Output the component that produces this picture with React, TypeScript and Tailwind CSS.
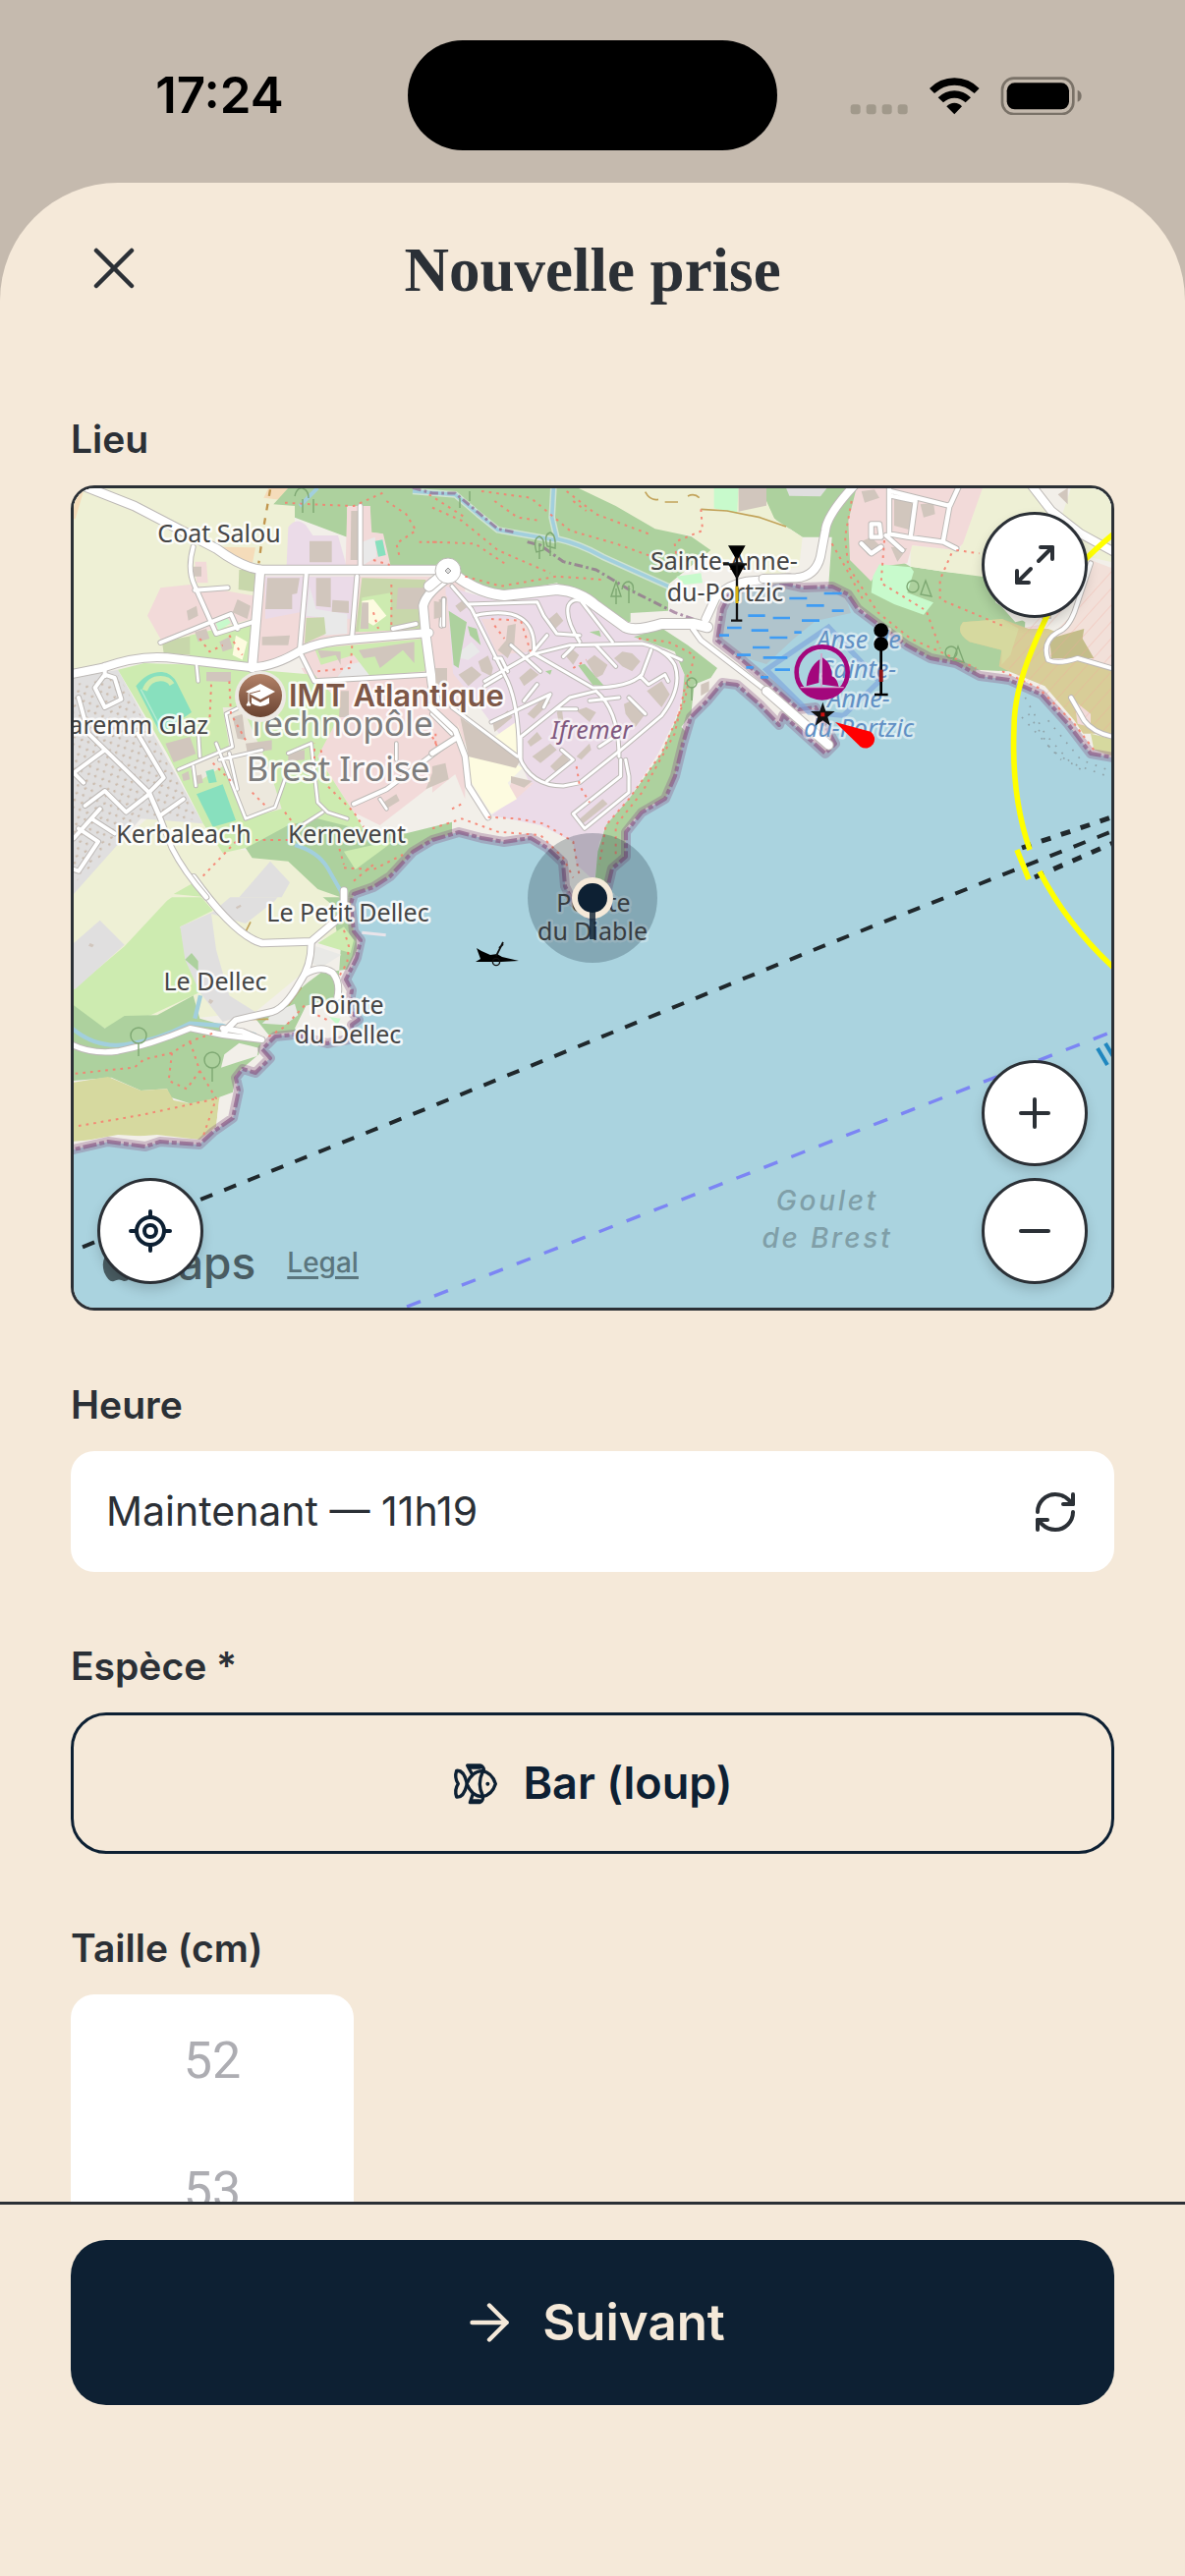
import { useState } from "react";
import { ArrowRight, LocateFixed, Maximize2, Minus, Plus, RefreshCw, X } from "lucide-react";

const FIELD = "#eef0d5";
const FOREST = "#add19e";
const GRASS = "#cdebb0";
const MEADOW = "#c8d7ab";
const HOMES = "#e0dfdf";
const SHOPS = "#f2dad9";
const CAMPUS = "#ebdbe8";
const BUILDING = "#d1c6bd";
const HEATH = "#d6d99f";
const PITCH = "#88e0be";
const PARK = "#c8facc";
const SAND = "#f2efe9";

const LAND =
  "M60 1172L75 1170L110 1162L148 1167L163 1162L203 1165L217 1152L237 1138L243 1110L240 1097L247 1088L260 1092L275 1077L267 1068L280 1055L300 1053L333 1062L360 1057L358 1043L365 1038L355 1027L358 1008L352 997L363 975L367 957L360 948L357 920L360 910L380 903L397 892L420 867L440 855L467 847L490 853L513 857L540 853L557 863L573 878L575 902L583 918L603 933L618 905L623 884L637 872L637 847L653 827L677 813L687 790L695 757L703 730L720 713L735 695L750 697L773 717L793 738L797 728L840 767L850 757L830 720L813 722L780 693L753 670L730 652L735 620L742 606L765 592L790 592L817 598L847 597L863 605L873 620L893 635L923 657L947 670L973 675L997 688L1027 692L1060 707L1087 737L1110 767L1150 774V480H60Z";

type Shape = { d: string; f: string };
type Line = { d: string; w: number };
type Tile = {
  at: string;
  fills: Shape[];
  buildings: string;
  roads: Line[];
  paths: string;
};

const tiles: Tile[] = [
  {
    at: "translate(60 900) scale(.33333)",
    fills: [
      { f: FIELD, d: "M0 -60H900V130L770 180V250L600 390L300 420L0 380Z" },
      { f: GRASS, d: "M45 320L200 190L330 50L400 0L470 80L370 130L400 220L430 330L280 400L140 440L45 380Z" },
      { f: HOMES, d: "M45 180L125 110L200 185L50 320H45ZM370 130L470 85L580 -10H700L660 50L570 120L465 90L480 200L520 340L600 390L500 420L430 330L385 230Z" },
      { f: FOREST, d: "M45 370L140 440L200 402L300 400L410 340L430 410L500 430L620 470L610 520L540 580L530 640L490 660L400 670L340 650L330 625L250 630L160 590L45 600ZM385 230L405 210L425 235V265Z" },
      { f: FOREST, d: "M640 460L600 410L700 350L760 300L800 270L880 260L910 200L900 0H760L830 60L860 200L850 350L760 370L720 450Z" },
      { f: HEATH, d: "M45 605L150 588L250 630L330 625L350 660L400 670L490 650L480 740L430 780L300 765L45 785Z" },
      { f: SAND, d: "M495 560L505 520L550 485L610 500L605 525L540 545ZM490 650L545 630L560 700L500 750L480 740ZM720 440L755 370L890 395V480H760ZM45 790L180 765L430 780V830H45Z" },
      { f: GRASS, d: "M790 180L870 130L900 170L890 210Z" },
      { f: "#e9e9e6", d: "M785 190L862 215L800 255L770 240ZM660 390L720 365L730 400L690 430L620 425Z" },
      { f: PARK, d: "M825 405L860 410L850 430Z" },
    ],
    buildings: "M95 180l12 5l-5 8l-12-5zM540 70l14-8l3 6l-14 8zM460 350l12 6l-8 10l-8-6zM500 375l14 8M785 400l15 15",
    roads: [
      { w: 20, d: "M410 -20Q540 160 620 180L770 175L870 90V20" },
      { w: 18, d: "M770 180Q770 250 735 300Q690 380 650 390L540 415L505 450" },
      { w: 18, d: "M750 275Q800 245 835 270Q860 300 850 345" },
      { w: 16, d: "M40 490Q100 520 180 510Q280 490 400 440L500 460L620 475M500 440L560 450L620 475" },
    ],
    paths:
      "M50 578L230 560L260 535L345 515L400 480L470 455M345 515L335 600L390 625L430 570L400 480M430 570L480 655L440 770M60 738L250 705L480 655M640 465L690 435L750 370M870 140L885 190L880 240L850 290M790 400L830 420",
  },
  {
    at: "translate(60 480) scale(.33333)",
    fills: [
      { f: FIELD, d: "M0 0H720V285L600 290V590L400 575L260 560L0 620Z" },
      { f: FIELD, d: "M0 1300L280 1050L440 1075L520 1150L900 1200V1300Z" },
      { f: "#f5dcba", d: "M45 50H78L50 145H45ZM640 50H700L690 88L625 80ZM500 230L600 232L590 285L530 268Z" },
      { f: FOREST, d: "M700 50H1240V310L1010 285L985 190L950 185V105H880V200L720 140V105L655 100Z" },
      { f: CAMPUS, d: "M700 170Q725 135 755 165L775 195H852L877 285H695Z" },
      { f: SHOPS, d: "M880 105H950L955 185L990 190L1012 285H875Z" },
      { f: SHOPS, d: "M740 600L1200 560V910L980 1080L900 1040L790 870L800 700Z" },
      { f: SHOPS, d: "M625 320H1240V1000L1200 900L1120 620L800 640L740 560L605 600Z" },
      { f: CAMPUS, d: "M630 320H905L890 450L755 445L735 430L630 450Z" },
      { f: "#e9e9e9", d: "M765 350L785 420L880 435V495L810 500L800 445L755 440ZM925 215L965 200L970 260L930 285ZM1150 460H1200V560H1150ZM880 590L950 575V635L840 640Z" },
      { f: MEADOW, d: "M925 325L1120 330L1110 480L905 490ZM755 447L810 445L815 495L750 525ZM550 300H600L595 367L548 360ZM315 520L410 500V560L320 555Z" },
      { f: GRASS, d: "M925 385L1015 370L1010 485L915 490ZM400 500L590 455L582 590L400 565ZM780 540L1115 510L1118 610L950 625L900 560L800 590Z" },
      { f: "#fdfbe0", d: "M925 395L960 390L1000 440L960 470L925 450ZM540 500L575 520L560 575L530 560Z" },
      { f: SHOPS, d: "M310 355L400 345L600 380L592 450L315 520L270 440ZM415 275H450L455 340H420Z" },
      { f: HOMES, d: "M45 630L180 605L440 1075L250 1060L45 1290Z" },
      { f: GRASS, d: "M180 605L260 585L420 590L780 620L870 720L790 870L900 1040L935 1100L700 1120L500 1165L440 1075L330 860L230 690Z" },
      { f: "#ece8dd", d: "M400 900L520 840L500 720L560 720L640 900L680 1030L570 1060L500 900L420 950Z" },
      { f: PITCH, d: "M235 655Q270 610 315 612Q345 615 360 645L405 735L310 800ZM420 985L500 955L540 1065L470 1085ZM448 915L472 908L482 948L458 952ZM965 212L988 208L998 255L975 260ZM585 1145L615 1142V1160H585Z" },
      { f: PARK, d: "M478 462L515 448L525 462L488 485Z" },
      { f: HOMES, d: "M550 1300L645 1190L705 1255L680 1300Z" },
      { f: FOREST, d: "M570 1150L700 1080L790 1060L930 1095L1060 1105L1200 1070V1300H860L790 1275L700 1190L590 1180Z" },
      { f: GRASS, d: "M870 1160L960 1140L1020 1130L905 1215ZM350 1290L420 1250L450 1300Z" },
    ],
    buildings:
      "M765 212H833V277H765ZM892 120H912V270H890ZM636 325H735L727 372L712 375V420H630ZM785 325H830V415L785 410ZM835 392L885 395V432L833 428ZM1035 355L1122 355V420H1030ZM325 830L400 810L418 862L350 888ZM450 612H525V642L450 640ZM620 505L705 500L700 530H620ZM915 545L1085 520V585L1050 545L980 600L965 565L930 570ZM790 545L860 550V590L845 560L800 570ZM545 390L585 410L575 450L530 430ZM390 425L420 410L425 440L395 455ZM410 290L435 290V320H410ZM925 400H945V480H920ZM1160 390V460H1180V390ZM1150 600H1185V650H1150ZM860 670H885V750H855ZM415 490L450 480L460 510L425 520ZM490 520L520 505L530 540L500 550ZM1140 920L1180 890L1190 940L1120 970ZM570 830L650 820V850L575 860ZM700 860L750 850V880L700 885ZM990 1010L1030 985L1040 1005L1000 1030ZM375 925L395 915L400 940L380 945ZM415 930L435 925L440 950L420 955ZM530 750L560 740L570 820L545 815Z",
    roads: [
      { w: 12, d: "M60 690L90 800L275 980M240 800L320 935L275 980M45 920L140 850M45 920L75 950M80 1020L140 975L205 1040L275 985M310 1050L380 1000M45 1120L125 1030M100 1060L170 1105M60 1090L120 1130L60 1220L45 1215M110 660L140 620L170 630L190 695L140 720ZM140 625V590" },
      { w: 8, d: "M365 910L530 840L510 740L560 715M410 900L418 960M430 870L425 790M480 830L570 1060L660 1025L690 940M520 860L545 970M490 880L620 850M770 830L790 1010L820 1040L880 1060M805 1040L750 1075M770 830L700 860M420 590L425 640M1030 830V880M980 1000L1000 1030" },
      { w: 12, d: "M410 230Q390 300 415 350L480 495L590 460M310 522L525 435L545 480M415 362L515 355M755 315L735 545M920 105V290M910 320L895 500M740 560L780 640L1120 620M1175 390L1168 470M1020 480L1090 465M900 1015L1000 970L1200 820M1140 740L1200 800" },
      { w: 14, d: "M275 980L310 1060L345 1150Q380 1220 450 1300" },
      { w: 26, d: "M40 30L230 105L480 235Q560 295 620 300H1160" },
      { w: 26, d: "M615 300L590 600" },
      { w: 24, d: "M40 618L130 600Q240 560 330 568L590 598Q660 595 740 545Q800 518 890 512L1130 492" },
      { w: 26, d: "M1200 315Q1120 370 1112 410L1120 500L1140 650L1150 700" },
    ],
    paths:
      "M690 95L770 100L900 105L1000 60M1000 90L1060 130L1090 180L1030 220L1040 260M1100 215H1160M960 270L1010 285M1130 70L1240 140M465 650L460 760M520 640L525 740L570 820M790 610L890 600L895 530M1015 345V480M960 430L975 480M430 510L460 550L500 530M520 500L560 560M470 890L530 950M590 980L630 1020M800 850L820 960L900 1040L930 1085M600 1125H700M440 1235L540 1130M690 1040L720 1080M870 1210L960 1215L1050 1170M900 1250L960 1200M780 900V830M1150 800V850M850 1130L870 1200",
  },
  {
    at: "translate(440 480) scale(.33333)",
    fills: [
      { f: FIELD, d: "M430 50H1080V330L850 260L790 195L700 185Z" },
      { f: FOREST, d: "M-20 50H445L560 105L680 175L790 198L850 240L720 345V430L600 460L480 390L380 340L220 370L100 330L-20 290Z" },
      { f: SAND, d: "M605 432L720 425L850 330L900 330L870 410V480L740 480L605 470Z" },
      { f: PARK, d: "M860 50H935L930 128L860 112ZM745 320L820 310L825 340L770 345Z" },
      { f: BUILDING, d: "M935 50H1070L1040 100L935 122Z" },
      { f: FOREST, d: "M1020 50H1090V180L1050 150Z" },
      { f: CAMPUS, d: "M40 350L200 395L430 370L600 495L650 500L740 560L780 640L740 760L690 860L600 1000L510 1130L495 1250L440 1200L430 1130L330 1080L180 1050L300 960L270 890L130 700L50 600Z" },
      { f: "#e9e9e9", d: "M85 550L120 520L145 550L110 575L85 570ZM0 560H45V590H0ZM120 900L160 890L195 950L150 970Z" },
      { f: SHOPS, d: "M150 450L270 450L310 500L300 550L200 560ZM0 360L45 380L65 640L0 640ZM0 760L60 820L100 900L0 980ZM240 950L310 950L250 1005L230 980Z" },
      { f: FOREST, d: "M50 425L105 460L80 600L65 590ZM108 472L135 480L148 530L115 500ZM445 592L465 587L525 655L490 652ZM480 490L510 485L515 505ZM345 610L365 605L360 620Z" },
      { f: FOREST, d: "M615 505L700 478L780 530L870 600L850 630L800 650L790 740L760 780L780 800L740 930L720 990L640 1035L590 1090L590 1180L540 1260L495 1270L505 1160L530 1080L600 1000L700 860L760 720L770 620L740 550Z" },
      { f: "#fdfbe0", d: "M75 765L110 870L250 890L275 905L230 950L258 1000L180 1045L120 950ZM190 810L255 765L262 870L225 840Z" },
    ],
    buildings:
      "M85 750L270 880L255 905L150 880L110 870ZM240 930L305 945L280 965L240 950ZM350 455L380 430L400 455L370 485ZM80 620L120 595L150 620L110 655ZM140 580L170 562L185 600L180 625L150 610ZM265 630L300 600L325 620L280 655ZM230 470L255 465L250 530L230 570L200 545L225 515ZM405 560L425 540L448 560L430 590ZM470 580L495 560L535 590L520 620L500 630ZM555 570L580 550L610 555L635 580L610 610L580 595ZM655 670L700 640L725 680L700 720ZM585 710L615 695L650 740L620 780L590 740ZM440 730L470 720L500 735L480 765ZM290 740L340 690L360 705L310 755ZM185 770L230 730L245 750L190 795ZM305 870L360 830L380 850L330 890ZM290 825L320 795L335 815L300 840ZM360 900L400 860L420 885L380 920ZM440 870L480 830L485 850L455 880ZM445 1065L520 1000L535 1015L460 1075ZM70 410L90 395L105 415L85 430ZM5 395L28 400V445L5 450ZM10 600H45V650H10ZM820 650L845 640V670L820 685ZM0 900L40 890L30 920L0 950ZM380 735L395 720L400 760L385 760Z",
    roads: [
      { w: 9, d: "M60 350L120 420L230 640Q265 720 265 870Q300 960 400 960L450 950L575 850L700 745Q765 660 740 590Q710 540 640 525L420 530L300 560L160 640" },
      { w: 9, d: "M110 405L320 398L340 440L380 495L450 500M130 440Q320 400 310 550M300 550L490 660Q600 660 640 620L668 545M450 390L550 520M450 520Q405 450 415 410Q430 380 470 400M270 880V810L420 690L500 670Q570 730 570 870M160 655L210 625M180 765L360 680L340 720M575 880V930L430 1045L465 1090L600 980V930L590 880M350 945L430 880L395 850M635 625L660 650L710 620L720 640M400 565L430 535M500 530L560 595M240 530L330 610M190 570H210L230 610M320 650L280 700M480 700L570 690M600 690L650 740M380 725H440M510 840L570 800M350 500L300 560" },
      { w: 16, d: "M-10 715L70 790L100 870L110 960L170 1055M0 860L70 815" },
      { w: 9, d: "M35 390V470M60 720L260 870M705 550L760 575" },
      { w: 30, d: "M-10 350L50 300Q130 370 220 378L380 360Q450 365 500 410L590 475Q620 490 700 465H800L840 475" },
      { w: 24, d: "M835 450L865 385Q900 345 960 335L1090 325" },
      { w: 14, d: "M795 480L820 515L1080 715" },
    ],
    paths:
      "M150 60L300 80L420 180L560 220L700 270M190 90L260 140L330 150M0 110L90 150L200 240L360 310M0 215L130 220L220 280M100 320L210 350L380 320L520 330M410 60L500 130L660 190M820 115L825 180L740 215M740 220L750 290M430 90L470 120M180 450L270 455L300 550M190 470L220 510M630 510L720 520L800 560L770 700L700 860L600 1000L530 1080L510 1200M780 620L740 800L640 980L560 1080L560 1180M170 1055L260 1060L340 1075L430 1130L450 1240M0 1090L90 1060L200 1100L330 1110L400 1180L430 1240M60 1030L100 1010M440 900L450 960L480 1010M430 600L470 575M0 810L20 850",
  },
  {
    at: "translate(780 480) scale(.33333)",
    fills: [
      { f: FOREST, d: "M0 50H280V200L440 290L540 305L690 320L700 400L790 460L780 640L650 640L430 540L250 385L190 345L200 200L110 200L20 140L0 90Z" },
      { f: FIELD, d: "M0 90L25 145L110 200L100 290L0 310Z" },
      { f: HOMES, d: "M60 50H185L165 76L70 74Z" },
      { f: FIELD, d: "M640 50H1070V280L980 260L690 325L540 305L440 290V225L590 240Z" },
      { f: SHOPS, d: "M275 50H660L600 220L580 240L445 225L430 280L345 290L320 335L255 270L250 150ZM770 480L850 465L830 530L770 510Z" },
      { f: PARK, d: "M345 283L440 292L450 305L430 370L510 400L480 437L390 405L320 370L325 320Z" },
      { f: SAND, d: "M800 50H930L900 140ZM680 370L760 460L1000 400L990 270Z" },
      { f: "#d8cd98", d: "M600 460L720 450L800 480L860 480L1070 560V800L960 800L850 660L740 610L710 595L718 545L620 520Q575 490 600 460Z" },
      { f: HEATH, d: "M600 460L720 450L770 480L745 560L718 590V545L620 520Q575 490 600 460ZM990 800L1070 820V890L1000 850Z" },
      { f: "#f2e0d9", d: "M990 270L1070 300V600L960 570L870 580L850 540L870 500L930 440L960 360Z" },
      { f: "#c4bd8a", d: "M865 510L970 480L965 510L1000 570L870 570Z" },
      { f: SAND, d: "M640 605L740 610L850 655L940 760L1000 850L1060 870V900H980L830 700L640 640Z" },
      { f: SHOPS, d: "M940 700L990 740L990 780L950 770Z" },
    ],
    buildings:
      "M390 85H445V180L390 165ZM470 100L510 95L515 130L480 140ZM290 60L330 55L345 80L300 95ZM285 215L320 200L345 225L310 255ZM380 230L430 235L400 275ZM890 70L920 50V100ZM840 420H870V450H840Z",
    roads: [
      { w: 13, d: "M375 40V190L430 200L540 215L580 235M380 60L560 105L590 40M560 100L540 210M385 75L455 90L440 200M320 160H345L350 200H320ZM290 220L320 250L350 230M365 195L415 240" },
      { w: 24, d: "M800 30L870 120L960 190L1070 250" },
      { w: 24, d: "M-10 327L90 325Q150 320 165 260L180 180Q185 130 275 35" },
      { w: 12, d: "M990 280L940 430Q920 480 890 490Q840 520 860 575Q890 590 950 570L1070 605M930 690L970 760Q1000 800 1070 812" },
      { w: 26, d: "M0 670L190 835" },
    ],
    paths:
      "M260 90L240 200L250 290L340 430L440 510L530 550L640 600M200 220L240 290L300 400M360 210L350 340L480 420M565 250L530 330L530 390L720 470M490 430L530 540M580 240L650 250M720 610L830 660L940 770L1000 850",
  },
];

const placeLabels = [
  { x: 223, y: 552, t: "Coat Salou" },
  { x: 187, y: 858, t: "Kerbaleac'h" },
  { x: 353, y: 858, t: "Kernevent" },
  { x: 354, y: 938, t: "Le Petit Dellec" },
  { x: 219, y: 1008, t: "Le Dellec" },
  { x: 353, y: 1032, t: "Pointe" },
  { x: 354, y: 1062, t: "du Dellec" },
  { x: 737, y: 580, t: "Sainte-Anne-" },
  { x: 738, y: 612, t: "du-Portzic" },
];

const bayLabels = [
  { y: 660, t: "Anse de" },
  { y: 690, t: "Sainte-" },
  { y: 720, t: "Anne-" },
  { y: 750, t: "du-Portzic" },
];

const marshDashes =
  "M70 387h54M176 372h54M122 409h54M200 425h36M20 447h52M108 455h54M-56 440h52M-120 477h44M-46 485h52M85 491h22M10 507h54M-144 500h30M-42 537h52M-10 568h74M-90 560h42M-62 598h22M26 605h46M-18 628h24";

function MapDrawing() {
  return (
    <svg
      className="absolute inset-0 size-full"
      viewBox="75 497 1056 834"
      preserveAspectRatio="xMidYMid slice"
      role="img"
      aria-label="Carte de la Pointe du Diable"
    >
      <defs>
        <clipPath id="land">
          <path d={LAND} />
        </clipPath>
        <pattern id="roofs" width="30" height="34" patternUnits="userSpaceOnUse" patternTransform="rotate(-28)">
          <path d="M3 5h8v6h-8zM18 20h7v7h-7z" fill="#cbbcae" />
        </pattern>
        <pattern id="hatch" width="34" height="34" patternUnits="userSpaceOnUse" patternTransform="rotate(42)">
          <path d="M0 0V34" stroke="#f3a79a" strokeWidth="3" opacity=".6" />
        </pattern>
        <linearGradient id="school" x1="0" y1="0" x2="0" y2="1">
          <stop offset="0" stopColor="#b38268" />
          <stop offset="1" stopColor="#6a4331" />
        </linearGradient>
      </defs>

      <rect x="60" y="480" width="1100" height="870" fill="#aad3df" />
      <path d="M733 622L742 606L765 594L790 594L817 600L847 599L860 606L866 624L830 632L808 650L780 676L754 668L730 652Z" fill="#b0c4cc" />
      <g clipPath="url(#land)">
        <path d={LAND} fill={SAND} />
        {tiles.map((tile) => (
          <g key={tile.at} transform={tile.at}>
            {tile.fills.map((s) => (
              <path key={s.d} d={s.d} fill={s.f} />
            ))}
          </g>
        ))}
        <g transform="translate(60 480) scale(.33333)">
          <path d="M45 650L180 620L430 1065L250 1050L45 1260Z" fill="url(#roofs)" />
          <path d="M262 668Q275 632 310 632Q335 632 345 650" fill="none" stroke={GRASS} strokeWidth="16" />
          <path d="M250 665L310 780" stroke="#b5ecd2" strokeWidth="4" />
        </g>
        <g transform="translate(780 480) scale(.33333)">
          <path d="M760 490L1070 280V810L940 740L740 610Z" fill="url(#hatch)" />
        </g>
      </g>
      <path d={LAND} fill="none" stroke="#8d618b" strokeWidth="10" opacity=".36" strokeLinejoin="round" />
      <path d={LAND} fill="none" stroke="#8d618b" strokeWidth="4" opacity=".75" strokeLinejoin="round" strokeDasharray="14 3 5 3" />

      <g fill="none" strokeLinejoin="round">
        <g transform="translate(440 480) scale(.33333)">
          <path d="M370 50L365 140L380 205Q450 220 520 260L720 350M-60 60L70 70L140 130L200 178L380 210" stroke="#cfe3d3" strokeWidth="20" />
          <path d="M370 50L365 140L380 205Q450 220 520 260L720 350M-60 60L70 70L140 130L200 178L380 210" stroke="#a2cfdd" strokeWidth="11" />
          <path d="M-60 50L0 66H70L140 125L200 175L250 185M290 215L330 225L400 275L500 300L600 360L740 430L850 470" stroke="#8d618b" strokeWidth="9" opacity=".65" strokeDasharray="26 10 8 10" />
          <path d="M650 62Q665 90 690 85M710 93H750M780 75Q800 65 815 80M820 115L900 120L1000 140L1080 168" stroke="#c2a35a" strokeWidth="5" />
        </g>
        <g transform="translate(60 480) scale(.33333)" stroke="#a2cfdd" strokeWidth="12">
          <path d="M735 105L790 50M720 1140Q790 1160 820 1210L860 1280L875 1320" />
          <path d="M645 55L625 170L610 280" stroke="#c2964e" strokeWidth="7" strokeDasharray="20 24" />
        </g>
        <g transform="translate(60 900) scale(.33333)" stroke="#a2cfdd" strokeWidth="13">
          <path d="M40 440Q110 500 200 490Q300 478 400 425L500 432L600 460M415 410L432 340" />
          <path d="M925 148L998 155" stroke="#e9e4ea" strokeWidth="9" />
          <path d="M570 145L585 115M585 412H640M700 370L740 315" stroke="#c2a35a" strokeWidth="5" />
        </g>
      </g>

      {tiles.map((tile) => (
        <g key={tile.at} transform={tile.at} fill="none" strokeLinejoin="round" strokeLinecap="round">
          <path d={tile.buildings} fill={BUILDING} />
          {tile.roads.map((r) => (
            <path key={r.d} d={r.d} stroke="#bdb9b6" strokeWidth={r.w + 6} />
          ))}
          {tile.roads.map((r) => (
            <path key={r.d} d={r.d} stroke="#ffffff" strokeWidth={r.w} />
          ))}
          <path d={tile.paths} stroke="#f6806f" strokeWidth="6" strokeDasharray="8 15" strokeLinecap="butt" opacity=".9" />
        </g>
      ))}
      <circle cx="456" cy="581" r="13" fill="#ffffff" stroke="#bdb9b6" strokeWidth="1" />
      <path d="M456 578L459 581L456 584L453 581Z" fill="#dddddd" stroke="#999999" strokeWidth="1" />

      <g fill="none" stroke="#7ea873" strokeWidth="1.4">
        <circle cx="141" cy="1054" r="8" />
        <path d="M141 1062v13M216 1087v14" />
        <circle cx="216" cy="1079" r="8" />
        <path d="M549 553v16M560 549v17M546 562q-4-14 3-16q6 2 4 14zM557 556q-4-12 3-14q6 2 5 16zM627 599v16M640 596v18M622 607l5-15l5 15zM633 600q1-8 7-8q6 2 4 10" />
        <path d="M704 699v14" />
        <circle cx="704" cy="695" r="5" />
        <circle cx="929" cy="597" r="6" />
        <path d="M937 605l5-14l6 16zM970 672l5-14l6 16zM308 508v14M319 508v14M300 505q2-9 8-8q6 2 6 10M468 507v10M478 500v10" />
        <circle cx="968" cy="664" r="6" />
      </g>

      <g transform="translate(780 480) scale(.33333)" fill="none">
        <path d="M190 475L345 640L235 745L130 735L0 605Z" stroke="#7ea4dc" strokeWidth="16" opacity=".65" />
        <path d={marshDashes} stroke="#3f9cf3" strokeWidth="8" />
        <path d="M790 690L850 800L930 890L1040 930M800 740L870 850L960 910M780 750L900 880M860 760L960 880L1040 910" stroke="#8fa2a8" strokeWidth="5" strokeDasharray="5 24" />
      </g>

      <g fill="none">
        <path d="M60 1279L440 1126L840 962L1140 843" stroke="#20282c" strokeWidth="4" strokeDasharray="13 12.9" />
        <path d="M1040 863L1140 829M1053 893L1140 855" stroke="#20282c" strokeWidth="5" strokeDasharray="10 11" />
        <path d="M414 1330L1140 1047" stroke="#7c85f4" strokeWidth="3.4" strokeDasharray="15 15" />
        <path d="M1140 538Q1100 570 1084 594T1050 662T1032 740Q1029 810 1048 865M1035 865L1047 895M1058 887Q1088 945 1140 991" stroke="#ffff00" strokeWidth="5.6" />
        <path d="M1117 1067L1127 1084M1125 1062L1137 1082" stroke="#2087bf" strokeWidth="4" />
      </g>

      <g
        textAnchor="middle"
        className="fill-[#454545] stroke-white/85 font-['Noto_Sans',sans-serif] text-[25px]"
        strokeWidth="5"
        strokeLinejoin="round"
        paintOrder="stroke"
      >
        {placeLabels.map((l) => (
          <text key={l.t} x={l.x} y={l.y}>
            {l.t}
          </text>
        ))}
        <text x="212" y="747" textAnchor="end">
          Gwaremm Glaz
        </text>
        <g className="stroke-white/30">
          <text x="604" y="928">
            Pointe
          </text>
          <text x="603" y="957">
            du Diable
          </text>
        </g>
        <g className="fill-[#7d7d7d] text-[35px]">
          <text x="346" y="749">
            Technopôle
          </text>
          <text x="344" y="795">
            Brest Iroise
          </text>
        </g>
        <g className="italic">
          <text x="602" y="752" className="fill-[#80597f] stroke-white/50">
            Ifremer
          </text>
          <g className="fill-[#6190c4] stroke-white/50">
            {bayLabels.map((l) => (
              <text key={l.y} x="874" y={l.y}>
                {l.t}
              </text>
            ))}
          </g>
        </g>
        <text x="294" y="719" textAnchor="start" className="fill-[#7d5747] font-['Inter',sans-serif] text-[31px] font-semibold">
          IMT Atlantique
        </text>
      </g>
      <g textAnchor="middle" className="fill-[#809fa8] font-['Inter',sans-serif] text-[28px] font-medium tracking-widest italic">
        <text x="842" y="1232">Goulet</text>
        <text x="842" y="1270">de Brest</text>
      </g>

      <circle cx="265" cy="709" r="26" fill="#ede9e4" />
      <circle cx="265" cy="708" r="22" fill="url(#school)" />
      <path d="M250 704L265 696L280 704L265 712ZM256 710L265 715L274 710V716Q265 722 256 716Z" fill="#ffffff" />
      <path d="M253 706V714L251 718H255L253 714" fill="#ffffff" stroke="#ffffff" strokeWidth="1" />
      <path d="M265 703L254 706" stroke="#8c5f4a" strokeWidth="1" />

      <g transform="translate(440 480) scale(.33333)">
        <path d="M903 226H956L930 272ZM903 282H956L930 330Z" fill="#000000" />
        <path d="M888 283H960M930 260V455M912 455H946" stroke="#111111" strokeWidth="7" />
        <path d="M930 350V402" stroke="#d9b310" strokeWidth="9" />
      </g>
      <g transform="translate(780 480) scale(.33333)">
        <circle cx="350" cy="485" r="22" />
        <circle cx="350" cy="527" r="22" />
        <path d="M350 540V680M330 681H371" stroke="#000000" strokeWidth="8" />
        <path d="M350 605V642" stroke="#8e1010" strokeWidth="12" />
        <circle cx="170" cy="613" r="78" fill="none" stroke="#a3077c" strokeWidth="14" />
        <path d="M104 660H236Q215 692 170 692Q125 692 104 660Z" fill="#a3077c" />
        <path d="M163 573Q125 600 122 655L160 645ZM171 568V650L221 657Q215 630 200 625Q200 585 171 568Z" fill="#a3077c" />
        <path d="M168 555V660M104 659H236" stroke="#d79bc8" strokeWidth="4" />
        <path d="M172 704L181 731L209 732L187 749L195 776L172 760L149 776L157 749L135 732L163 731Z" fill="#111111" />
        <path d="M166 736h12v12h-12z" fill="#cc1111" />
        <path d="M210 765L318 794A27 27 0 1 1 287 840Z" fill="#ff0000" />
      </g>
      <path
        d="M485 965L490 968L499 972L506 971L511 974L528 978L510 979H484L489 976Z"
        fill="#000000"
      />
      <path d="M505 973L512 959M508 965L512 961" fill="none" stroke="#111111" strokeWidth="1.8" />
      <circle cx="505" cy="979" r="3.6" fill="none" stroke="#111111" strokeWidth="1.4" />

      <circle cx="603" cy="914" r="66" fill="#0d2033" opacity=".24" />
      <circle cx="603" cy="914" r="21" fill="#f5e9d9" />
      <circle cx="603" cy="914" r="15" fill="#0d2033" />
      <path d="M603 926V956" stroke="#0d2033" strokeWidth="6" opacity=".8" />
    </svg>
  );
}

const roundButton =
  "flex size-[108px] items-center justify-center rounded-full border-[3px] border-[#2b3036] bg-white text-[#2b3036] shadow-[0_6px_12px_rgba(0,0,0,0.15)]";
const labelText = "text-[39px] leading-[47px] font-semibold text-[#2b3036]";

function StatusBar() {
  return (
    <div className="flex h-[186px] shrink-0 items-start pt-[41px]">
      <div className="flex h-[112px] flex-1 items-center justify-center pl-8 text-[51px] font-semibold text-black">17:24</div>
      <div className="h-[112px] w-[376px] rounded-full bg-black" />
      <div className="flex h-[112px] flex-1 items-center justify-center pr-8">
        <svg width="238" height="40" viewBox="40 50 714 120" aria-hidden="true">
          <g fill="#a1998b">
            <rect x="45" y="138" width="30" height="30" rx="9" />
            <rect x="93" y="138" width="30" height="30" rx="9" />
            <rect x="141" y="138" width="30" height="30" rx="9" />
            <rect x="189" y="138" width="30" height="30" rx="9" />
          </g>
          <path d="M286 89Q318 57 362 57Q406 57 438 89L423 104Q396 79 362 79Q328 79 301 104Z" />
          <path d="M312 117Q334 96 362 96Q390 96 412 117L396 132Q382 118 362 118Q342 118 328 132Z" />
          <path d="M338 144Q348 133 362 133Q376 133 385 144L362 168Z" />
          <rect x="508" y="58" width="217" height="109" rx="35" fill="none" stroke="#7a7268" strokeWidth="8" />
          <rect x="522" y="72" width="190" height="81" rx="24" />
          <path d="M738 94Q750 99 750 112Q750 125 738 130Z" fill="#7a7268" />
        </svg>
      </div>
    </div>
  );
}

function FishIcon() {
  return (
    <svg width="48" height="48" viewBox="0 0 144 144" fill="none" stroke="currentColor" strokeWidth="10" strokeLinecap="round" strokeLinejoin="round" aria-hidden="true">
      <path d="M45 74C56 48 72 35 92 35C112 38 126 52 133 74C126 96 112 110 92 113C72 113 56 100 45 74Z" />
      <path d="M94 37Q76 74 94 111" />
      <path d="M45 70C38 42 28 32 14 34C9 48 11 62 19 74C11 86 9 100 14 114C28 116 38 106 45 78" />
      <path d="M62 46L47 18H86Q96 20 98 34M64 104L55 131H84Q94 128 95 114" />
      <path d="M56 24H86M62 126H84" />
      <circle cx="109" cy="74" r="6" fill="currentColor" stroke="none" />
    </svg>
  );
}

export default function App() {
  const [time, setTime] = useState("Maintenant — 11h19");

  return (
    <div className="flex h-screen flex-col overflow-hidden bg-[#c5baae] font-['Inter',sans-serif]">
      <StatusBar />
      <div className="flex min-h-0 flex-1 flex-col overflow-hidden rounded-t-[120px] bg-[#f5e9d9]">
        <header className="grid h-[174px] shrink-0 grid-cols-[1fr_auto_1fr] items-center px-20">
          <button type="button" aria-label="Fermer" className="w-fit text-[#2b3036]">
            <X size={72} strokeWidth={1.5} />
          </button>
          <h1 className="pt-1 font-['Liberation_Serif',serif] text-[63px] leading-none font-bold text-[#2b3036]">
            Nouvelle prise
          </h1>
          <span />
        </header>

        <main className="flex min-h-0 flex-1 flex-col gap-[72px] overflow-hidden px-[72px] pt-[63px]">
          <section className="flex shrink-0 flex-col gap-6">
            <h2 className={labelText}>Lieu</h2>
            <div className="relative h-[840px] overflow-hidden rounded-3xl border-[3px] border-[#2b3036]">
              <MapDrawing />
              <div className="absolute bottom-4 left-7 flex items-center gap-8">
                <span className="flex items-center text-[#4a5d63]">
                  <svg width="36" height="44" viewBox="0 0 36 44" fill="currentColor" aria-hidden="true">
                    <path d="M18 13Q25 8 32 14Q24 22 33 31Q28 42 23 41Q18 38 13 41Q8 43 3 32Q-1 18 8 12Q13 11 18 13ZM18 10Q17 3 25 0Q25 8 18 10Z" />
                  </svg>
                  <span className="text-[46px] leading-[60px] font-medium">Maps</span>
                </span>
                <a href="#legal" className="text-[28px] font-medium text-[#5b767e] underline decoration-[3px] underline-offset-4">
                  Legal
                </a>
              </div>
              <div className="absolute inset-6 flex items-end justify-between">
                <button type="button" aria-label="Ma position" className={roundButton}>
                  <LocateFixed size={48} className="text-[#0d2033]" />
                </button>
                <div className="flex h-full flex-col justify-between">
                  <button type="button" aria-label="Agrandir la carte" className={roundButton}>
                    <Maximize2 size={48} />
                  </button>
                  <div className="flex flex-col gap-3">
                    <button type="button" aria-label="Zoom avant" className={roundButton}>
                      <Plus size={48} />
                    </button>
                    <button type="button" aria-label="Zoom arrière" className={roundButton}>
                      <Minus size={48} />
                    </button>
                  </div>
                </div>
              </div>
            </div>
          </section>

          <section className="flex shrink-0 flex-col gap-6">
            <label htmlFor="heure" className={labelText}>
              Heure
            </label>
            <div className="flex h-[123px] items-center rounded-3xl bg-white px-9 text-[#2b3036]">
              <input
                id="heure"
                value={time}
                onChange={(e) => setTime(e.target.value)}
                className="min-w-0 flex-1 bg-transparent text-[41px] outline-none"
              />
              <button type="button" aria-label="Actualiser l'heure">
                <RefreshCw size={48} />
              </button>
            </div>
          </section>

          <section className="flex shrink-0 flex-col gap-6">
            <h2 id="espece" className={labelText}>
              Espèce *
            </h2>
            <button
              type="button"
              aria-describedby="espece"
              className="flex h-36 items-center justify-center gap-6 rounded-[36px] border-[3px] border-[#0d2033] text-[45px] font-semibold text-[#0d2033]"
            >
              <FishIcon />
              Bar (loup)
            </button>
          </section>

          <section className="flex shrink-0 flex-col gap-6">
            <h2 id="taille" className={labelText}>
              Taille (cm)
            </h2>
            <ul role="listbox" aria-labelledby="taille" className="w-72 rounded-3xl bg-white pt-0.5 font-['Roboto',sans-serif] text-[52px] text-[#adadb2]">
              {[52, 53, 54].map((n) => (
                <li key={n} role="option" aria-selected={false} className="flex h-[132px] items-center justify-center">
                  {n}
                </li>
              ))}
            </ul>
          </section>
        </main>

        <footer className="shrink-0 border-t-[3px] border-[#2b3036] px-[72px] pt-9 pb-[174px]">
          <button
            type="button"
            className="flex h-[168px] w-full items-center justify-center gap-6 rounded-[36px] bg-[#0d2033] text-[51px] font-semibold text-[#f5e9d9]"
          >
            <ArrowRight size={60} strokeWidth={1.75} />
            Suivant
          </button>
        </footer>
      </div>
    </div>
  );
}
